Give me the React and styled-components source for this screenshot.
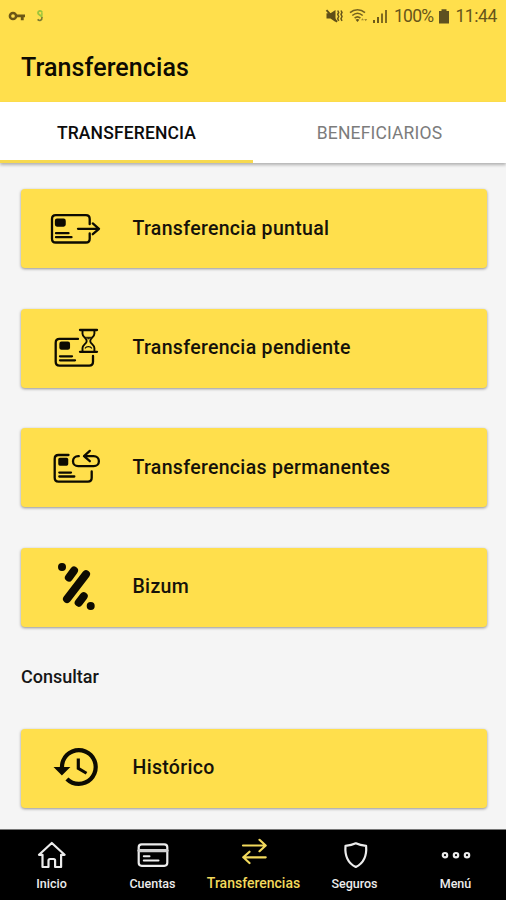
import React from "react";
import styled, { createGlobalStyle } from "styled-components";

const App = () => {
  return (
    <Screen>
      <GlobalStyle />
      <Header>
        <StatusBar>
          <StatusGroup>
            <KeyIcon />
            <CoinIcon />
          </StatusGroup>
          <StatusGroup>
            <MuteIcon />
            <WifiIcon />
            <SignalIcon />
            <StatusText $spacing="-0.7px">100%</StatusText>
            <BatteryIcon />
            <StatusText $spacing="-0.4px">11:44</StatusText>
          </StatusGroup>
        </StatusBar>
        <Title>Transferencias</Title>
      </Header>
      <Tabs>
        <Tab $active>TRANSFERENCIA</Tab>
        <Tab>BENEFICIARIOS</Tab>
      </Tabs>
      <Content>
        <Card>
          <OneOffIcon />
          <CardText>Transferencia puntual</CardText>
        </Card>
        <Card>
          <PendingIcon />
          <CardText>Transferencia pendiente</CardText>
        </Card>
        <Card>
          <PermanentIcon />
          <CardText>Transferencias permanentes</CardText>
        </Card>
        <Card>
          <BizumIcon />
          <CardText>Bizum</CardText>
        </Card>
        <SectionTitle>Consultar</SectionTitle>
        <Card>
          <HistoryIcon />
          <CardText>Histórico</CardText>
        </Card>
      </Content>
      <NavBar>
        <NavItem>
          <HomeIcon />
          <NavText>Inicio</NavText>
        </NavItem>
        <NavItem>
          <AccountsIcon />
          <NavText>Cuentas</NavText>
        </NavItem>
        <NavItem $active>
          <TransferIcon />
          <NavText $active>Transferencias</NavText>
        </NavItem>
        <NavItem>
          <ShieldIcon />
          <NavText>Seguros</NavText>
        </NavItem>
        <NavItem>
          <MoreIcon />
          <NavText>Menú</NavText>
        </NavItem>
      </NavBar>
    </Screen>
  );
};

const KeyIcon = () => (
  <svg width="18" height="14" viewBox="0 0 18 14">
    <circle cx="5" cy="7" r="3.1" fill="none" stroke="#6b5716" strokeWidth="2.5" />
    <path d="M8 5.500h9v2.800h-1.300v2.900h-2.900V8.300H8z" fill="#6b5716" />
  </svg>
);

const CoinIcon = () => (
  <svg width="8" height="14" viewBox="0 0 8 14">
    <path d="M6 3.2C5 1.2 2 1.6 2 4c0 2.2 4 2 4 4.6" fill="none" stroke="#9cc53c" strokeWidth="1.9" />
    <path d="M5.900 3.200v3.600" stroke="#9cc53c" strokeWidth="1.5" />
    <path d="M6 8c.2 3.6-2.6 4.4-4.4 2.4" fill="none" stroke="#7c7a30" strokeWidth="1.6" />
  </svg>
);

const MuteIcon = () => (
  <svg width="18" height="16" viewBox="0 0 18 16">
    <path d="M1.500 5.300h4L10.500 2v12L5.500 10.600h-4z" fill="#5f4f18" />
    <path d="M1.500 2.200 12 13.800" stroke="#5f4f18" strokeWidth="1.900" />
    <path d="m12.700 2.500 1 1.900-1 1.900 1 2.200-1 2.200 1 2.200M16 2.500l1 1.900-1 1.900 1 2.200-1 2.200 1 2.200" fill="none" stroke="#67551a" strokeWidth="1.500" />
  </svg>
);

const WifiIcon = () => (
  <svg width="20" height="16" viewBox="0 0 20 16">
    <g fill="none" stroke="#75621e" strokeWidth="1.6">
      <path d="M2 4.600C6.400.8 12.600.8 17 4.600" />
      <path d="M4.300 7.500c3.200-2.800 7.200-2.800 10.400 0" />
      <path d="M6.600 10.200c1.800-1.600 4-1.600 5.800 0" />
    </g>
    <path d="m9.500 14-1.900-2.300c1.200-.9 2.600-.9 3.800 0z" fill="#67551a" />
    <path d="m13 12.200 1.500-2 1.500 2zM16.200 11l1.500 2.200 1.500-2.200z" fill="#a58c2c" />
  </svg>
);

const SignalIcon = () => (
  <svg width="16" height="15" viewBox="0 0 16 15">
    <path d="M0 11h2v3H0zM4 8h2v6H4z" fill="#6d5a1a" />
    <path d="M8 4.500h2V14H8zM12 1h2v13h-2z" fill="#806b20" />
  </svg>
);

const BatteryIcon = () => (
  <svg width="12" height="15" viewBox="0 0 12 15">
    <path d="M3.500.3h5V2H11v12.500H1V2h2.500z" fill="#5f5120" />
  </svg>
);

const OneOffIcon = () => (
  <CardIcon viewBox="0 0 60 60">
    <path d="M44.700 25.200V20q0-3.800-3.800-3.800H10.800Q7 16.200 7 20v19.700q0 3.800 3.800 3.800h30.100q3.800 0 3.800-3.800v-5.300" />
    <rect x="11" y="20.700" width="8.600" height="5.900" rx="1" fill="#0d0b02" />
    <path d="M11 34.200h12.500M11 38.200h15.500" />
    <path d="M33 29.800h21M47.800 24.400l6.200 5.400-6.200 5.400" />
  </CardIcon>
);

const PendingIcon = () => (
  <CardIcon viewBox="0 0 60 60">
    <path d="M33 20.900H14.500q-3.800 0-3.800 3.800v19.100q0 3.800 3.800 3.800h29.700q3.800 0 3.800-3.800V38" />
    <rect x="15.500" y="24.700" width="8.400" height="6" rx="1" fill="#0d0b02" />
    <path d="M15 38.300h12M15 42.300h15" />
    <path d="M35 12h17M35 33.800h17" />
    <path d="M37.500 12.500v3.200c0 3.600 4.200 4.200 4.200 7.200s-4.200 3.600-4.200 7.200v3.200M49.400 12.500v3.200c0 3.600-4.200 4.200-4.200 7.200s4.200 3.600 4.200 7.200v3.200" strokeWidth="1.900" />
    <path d="M40.500 19.200h6L43.500 21z" strokeWidth=".6" fill="#0d0b02" />
    <path d="M40.300 30c1-1.800 5.200-1.800 6.200 0" strokeWidth="1.300" />
  </CardIcon>
);

const PermanentIcon = () => (
  <CardIcon viewBox="0 0 60 60">
    <path d="M23.500 17H13.500q-3.800 0-3.800 3.800v19q0 3.800 3.800 3.800h29.400q3.800 0 3.800-3.800v-6.300" />
    <rect x="14.400" y="20.800" width="7.700" height="5.700" rx=".5" fill="#0d0b02" />
    <path d="M14.300 34.600H26M14.300 38.500h15" />
    <path d="M33.800 18.200h-.6c-3 0-5.200 2.200-5.200 5s2.200 5 5.200 5h15.500c3 0 5.200-2.200 5.200-5s-2.200-5-5.200-5H39M44.800 12.900 39 18.200l5.800 5" />
  </CardIcon>
);

const BizumIcon = () => (
  <CardIcon viewBox="0 0 60 60">
    <g strokeWidth="8">
      <path d="M17 10h.01M29 13.600l-5.100 7M41 17.200 22 42M38.700 39.200l-5 6.500M45.700 49h.01" />
    </g>
  </CardIcon>
);

const HistoryIcon = () => (
  <CardIcon viewBox="0 0 60 60">
    <path
      transform="translate(6.400 3.700) scale(2.110)"
      fill="#0d0b02"
      stroke="none"
      d="M13 3a9 9 0 0 0-9 9H1l3.890 3.890.07.14L9 12H6c0-3.870 3.130-7 7-7s7 3.130 7 7-3.130 7-7 7c-1.930 0-3.680-.79-4.940-2.060l-1.420 1.420A8.954 8.954 0 0 0 13 21a9 9 0 0 0 0-18zm-1 5v5l4.280 2.540.72-1.210-3.500-2.080V8z"
    />
  </CardIcon>
);

const HomeIcon = () => (
  <NavIcon viewBox="0 0 32 32">
    <path d="M15.800 4 3 15.800h3.500V28h6v-6.500q0-1.500 1.500-1.500h3.600q1.500 0 1.500 1.500V28h6V15.800h3.500z" />
  </NavIcon>
);

const AccountsIcon = () => (
  <NavIcon viewBox="0 0 32 32">
    <rect x="1.700" y="5.300" width="28.600" height="21.500" rx="3" />
    <path d="M2 11.600h28" strokeWidth="3.200" stroke="#d0d0d0" />
    <path d="M6.800 17.300H12.500M6.800 21.400H21.500" strokeWidth="2" />
  </NavIcon>
);

const TransferIcon = () => (
  <NavIcon viewBox="0 0 32 32">
    <path d="M5 7.500h22.500M21.500 1.800l6.200 5.700-6.200 5.700M27.700 19.300H5.200M11.500 13.700l-6.200 5.600 6.200 5.700" />
  </NavIcon>
);

const ShieldIcon = () => (
  <NavIcon viewBox="0 0 32 32">
    <path d="M16.800 4.300C13.500 6 10 6.600 6.500 6.800c-.8 9.500 2.200 17.200 10.300 21.200 8.100-4 11.100-11.700 10.300-21.200-3.500-.2-7-.8-10.300-2.500z" />
  </NavIcon>
);

const MoreIcon = () => (
  <NavIcon viewBox="0 0 32 32">
    <circle cx="5" cy="16.200" r="2.200" />
    <circle cx="16" cy="16.200" r="2.200" />
    <circle cx="27" cy="16.200" r="2.200" />
  </NavIcon>
);

const GlobalStyle = createGlobalStyle`
  * {
    box-sizing: border-box;
  }
  body {
    margin: 0;
    background: #f5f5f5;
    font-family: Roboto, "Liberation Sans", sans-serif;
  }
`;

const Screen = styled.div`
  width: 506px;
  height: 900px;
  display: flex;
  flex-direction: column;
  overflow: hidden;
  background: #f5f5f5;
`;

const Header = styled.header`
  height: 102px;
  background: #ffdf4c;
`;

const StatusBar = styled.div`
  height: 32px;
  padding: 0 9px 0 8px;
  display: flex;
  align-items: center;
  justify-content: space-between;
`;

const StatusGroup = styled.div`
  display: flex;
  align-items: center;
  gap: 5px;
  &:first-child {
    gap: 10px;
  }
`;

const StatusText = styled.span`
  font-size: 17.5px;
  line-height: 32px;
  letter-spacing: ${(props) => props.$spacing};
  color: #67551a;
`;

const Title = styled.h1`
  margin: 0;
  padding: 20px 21px 0;
  font-size: 25px;
  line-height: 32px;
  font-weight: 500;
  letter-spacing: 0.1px;
  color: #0d0b02;
`;

const Tabs = styled.div`
  position: relative;
  height: 61px;
  flex-shrink: 0;
  display: flex;
  background: #ffffff;
  box-shadow: 0 2px 3px rgba(0, 0, 0, 0.28);
`;

const Tab = styled.div`
  flex: 1;
  padding-top: 4px;
  display: flex;
  align-items: center;
  justify-content: center;
  font-size: 17.5px;
  font-weight: ${(props) => (props.$active ? 500 : 400)};
  letter-spacing: 0.15px;
  color: ${(props) => (props.$active ? "#0c0c0c" : "#7c7c7c")};
  border-bottom: 3px solid ${(props) => (props.$active ? "#f7d94f" : "#ffffff")};
`;

const Content = styled.main`
  flex: 1;
  min-height: 0;
  padding: 26px 19px 0 21px;
`;

const Card = styled.div`
  height: 79px;
  margin-bottom: 40.5px;
  padding-left: 24px;
  display: flex;
  align-items: center;
  gap: 27.5px;
  border-radius: 4px;
  background: #ffdf4c;
  box-shadow: 0 1px 3px rgba(0, 0, 0, 0.4);
`;

const CardIcon = styled.svg`
  width: 60px;
  height: 60px;
  fill: none;
  stroke: #0d0b02;
  stroke-width: 2.3;
  stroke-linecap: round;
  stroke-linejoin: round;
`;

const CardText = styled.span`
  margin-top: -1px;
  font-size: 19.5px;
  font-weight: 500;
  letter-spacing: 0.31px;
  color: #15120a;
`;

const SectionTitle = styled.h2`
  margin: -3px 0 38.5px;
  font-size: 18px;
  line-height: 26px;
  font-weight: 500;
  color: #161616;
`;

const NavBar = styled.nav`
  height: 71px;
  flex-shrink: 0;
  padding-left: 1px;
  display: flex;
  background: #000000;
  border-top: 1px solid #777777;
`;

const NavItem = styled.div`
  flex: 1;
  padding-top: ${(props) => (props.$active ? "8px" : "9px")};
  display: flex;
  flex-direction: column;
  align-items: center;
  color: ${(props) => (props.$active ? "#f2d95c" : "#ececec")};
`;

const NavIcon = styled.svg`
  width: 32px;
  height: 32px;
  fill: none;
  stroke: currentColor;
  stroke-width: 2.2;
  stroke-linecap: round;
  stroke-linejoin: round;
`;

const NavText = styled.span`
  margin-top: 4px;
  font-size: ${(props) => (props.$active ? "14px" : "12.5px")};
  line-height: 18px;
  font-weight: 500;
`;

export default App;
